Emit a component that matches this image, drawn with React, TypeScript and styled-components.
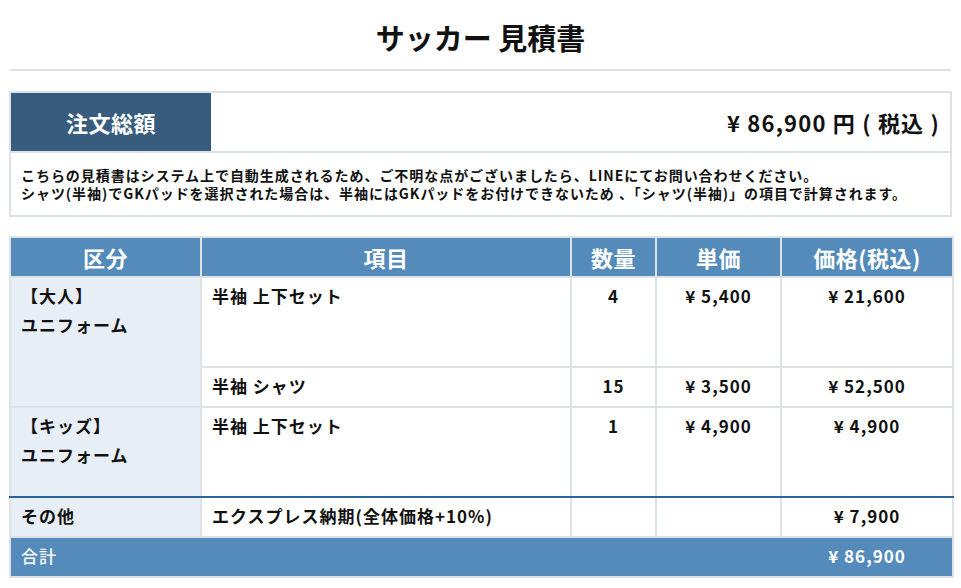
import React from "react";
import styled, { createGlobalStyle } from "styled-components";

const GlobalStyle = createGlobalStyle`
  body {
    margin: 0;
    background: #ffffff;
    color: #111111;
    font-family: "Noto Sans CJK JP", "Noto Sans", sans-serif;
  }
`;

const Page = styled.div`
  width: 943px;
  padding: 0 9px;
`;

const Title = styled.h1`
  margin: 0 1px;
  height: 64px;
  padding-top: 5px;
  display: flex;
  align-items: center;
  justify-content: center;
  font-size: 29px;
  font-weight: 700;
  border-bottom: 2px solid #dde2e7;
`;

const SummaryBox = styled.div`
  margin-top: 20px;
  border: 2px solid #dde2e7;
`;

const SummaryRow = styled.div`
  display: grid;
  grid-template-columns: 200px 1fr;
  height: 58px;
`;

const SummaryLabel = styled.div`
  background: #375c7e;
  color: #ffffff;
  font-size: 22px;
  font-weight: 700;
  display: flex;
  align-items: center;
  justify-content: center;
  letter-spacing: 0.5px;
`;

const SummaryAmount = styled.div`
  display: flex;
  align-items: center;
  justify-content: flex-end;
  padding-right: 10px;
  font-size: 22px;
  font-weight: 700;
  letter-spacing: 1.2px;
`;

const Note = styled.div`
  border-top: 2px solid #dde2e7;
  height: 62px;
  padding: 0 10px;
  display: flex;
  flex-direction: column;
  justify-content: center;
  font-size: 14px;
  font-weight: 700;
  line-height: 18px;
  letter-spacing: 0.95px;
`;

const Table = styled.table`
  margin-top: 19px;
  width: 943px;
  table-layout: fixed;
  border-collapse: collapse;
`;

const HeadCell = styled.th`
  height: 38px;
  padding: 0;
  background: #548bbb;
  color: #ffffff;
  font-size: 22px;
  font-weight: 700;
  letter-spacing: 0.5px;
  text-align: center;
  border: 2px solid #dde2e7;
`;

const Cell = styled.td<{ $align?: "left" | "center"; $tall?: boolean; $category?: boolean; $divider?: boolean }>`
  height: ${(p) => (p.$tall ? "79px" : "29px")};
  padding: 3px 10px 6px;
  vertical-align: top;
  text-align: ${(p) => p.$align ?? "left"};
  background: ${(p) => (p.$category ? "#e8eef5" : "#ffffff")};
  font-size: 17px;
  font-weight: 700;
  line-height: 29px;
  letter-spacing: 1px;
  border: 2px solid #dde2e7;
  border-bottom-color: ${(p) => (p.$divider ? "#2c6399" : "#dde2e7")};
`;

const TotalCell = styled.td<{ $align?: "left" | "center"; $strong?: boolean }>`
  height: 29px;
  padding: 3px 10px 6px;
  background: #548bbb;
  color: #ffffff;
  text-align: ${(p) => p.$align ?? "left"};
  font-size: 17px;
  font-weight: ${(p) => (p.$strong ? 700 : 500)};
  line-height: 29px;
  letter-spacing: 1px;
  border: 2px solid #dde2e7;
  border-left-color: ${(p) => (p.$strong ? "#548bbb" : "#dde2e7")};
  border-right-color: ${(p) => (p.$strong ? "#dde2e7" : "#548bbb")};
`;

type Line = { item: string; qty: string; unit: string; price: string };

const groups: { label: string[]; lines: Line[]; tall: boolean[] }[] = [
  {
    label: ["【大人】", "ユニフォーム"],
    lines: [
      { item: "半袖 上下セット", qty: "4", unit: "¥ 5,400", price: "¥ 21,600" },
      { item: "半袖 シャツ", qty: "15", unit: "¥ 3,500", price: "¥ 52,500" },
    ],
    tall: [true, false],
  },
  {
    label: ["【キッズ】", "ユニフォーム"],
    lines: [{ item: "半袖 上下セット", qty: "1", unit: "¥ 4,900", price: "¥ 4,900" }],
    tall: [true],
  },
];

export default function App() {
  return (
    <Page>
      <GlobalStyle />
      <Title>サッカー 見積書</Title>
      <SummaryBox>
        <SummaryRow>
          <SummaryLabel>注文総額</SummaryLabel>
          <SummaryAmount>¥ 86,900 円 ( 税込 )</SummaryAmount>
        </SummaryRow>
        <Note>
          <div>こちらの見積書はシステム上で自動生成されるため、ご不明な点がございましたら、LINEにてお問い合わせください。</div>
          <div>シャツ(半袖)でGKパッドを選択された場合は、半袖にはGKパッドをお付けできないため 、「シャツ(半袖)」の項目で計算されます。</div>
        </Note>
      </SummaryBox>
      <Table>
        <colgroup>
          <col style={{ width: 191 }} />
          <col style={{ width: 370 }} />
          <col style={{ width: 85 }} />
          <col style={{ width: 125 }} />
          <col style={{ width: 172 }} />
        </colgroup>
        <thead>
          <tr>
            <HeadCell>区分</HeadCell>
            <HeadCell>項目</HeadCell>
            <HeadCell>数量</HeadCell>
            <HeadCell>単価</HeadCell>
            <HeadCell>価格(税込)</HeadCell>
          </tr>
        </thead>
        <tbody>
          {groups.map((g, gi) =>
            g.lines.map((l, li) => {
              const divider = gi === groups.length - 1;
              return (
                <tr key={`${gi}-${li}`}>
                  {li === 0 && (
                    <Cell rowSpan={g.lines.length} $category $divider={divider}>
                      {g.label[0]}
                      <br />
                      {g.label[1]}
                    </Cell>
                  )}
                  <Cell $tall={g.tall[li]} $divider={divider}>{l.item}</Cell>
                  <Cell $align="center" $divider={divider}>{l.qty}</Cell>
                  <Cell $align="center" $divider={divider}>{l.unit}</Cell>
                  <Cell $align="center" $divider={divider}>{l.price}</Cell>
                </tr>
              );
            })
          )}
          <tr>
            <Cell $category>その他</Cell>
            <Cell>エクスプレス納期(全体価格+10%)</Cell>
            <Cell />
            <Cell />
            <Cell $align="center">¥ 7,900</Cell>
          </tr>
          <tr>
            <TotalCell colSpan={4}>合計</TotalCell>
            <TotalCell $align="center" $strong>¥ 86,900</TotalCell>
          </tr>
        </tbody>
      </Table>
    </Page>
  );
}
